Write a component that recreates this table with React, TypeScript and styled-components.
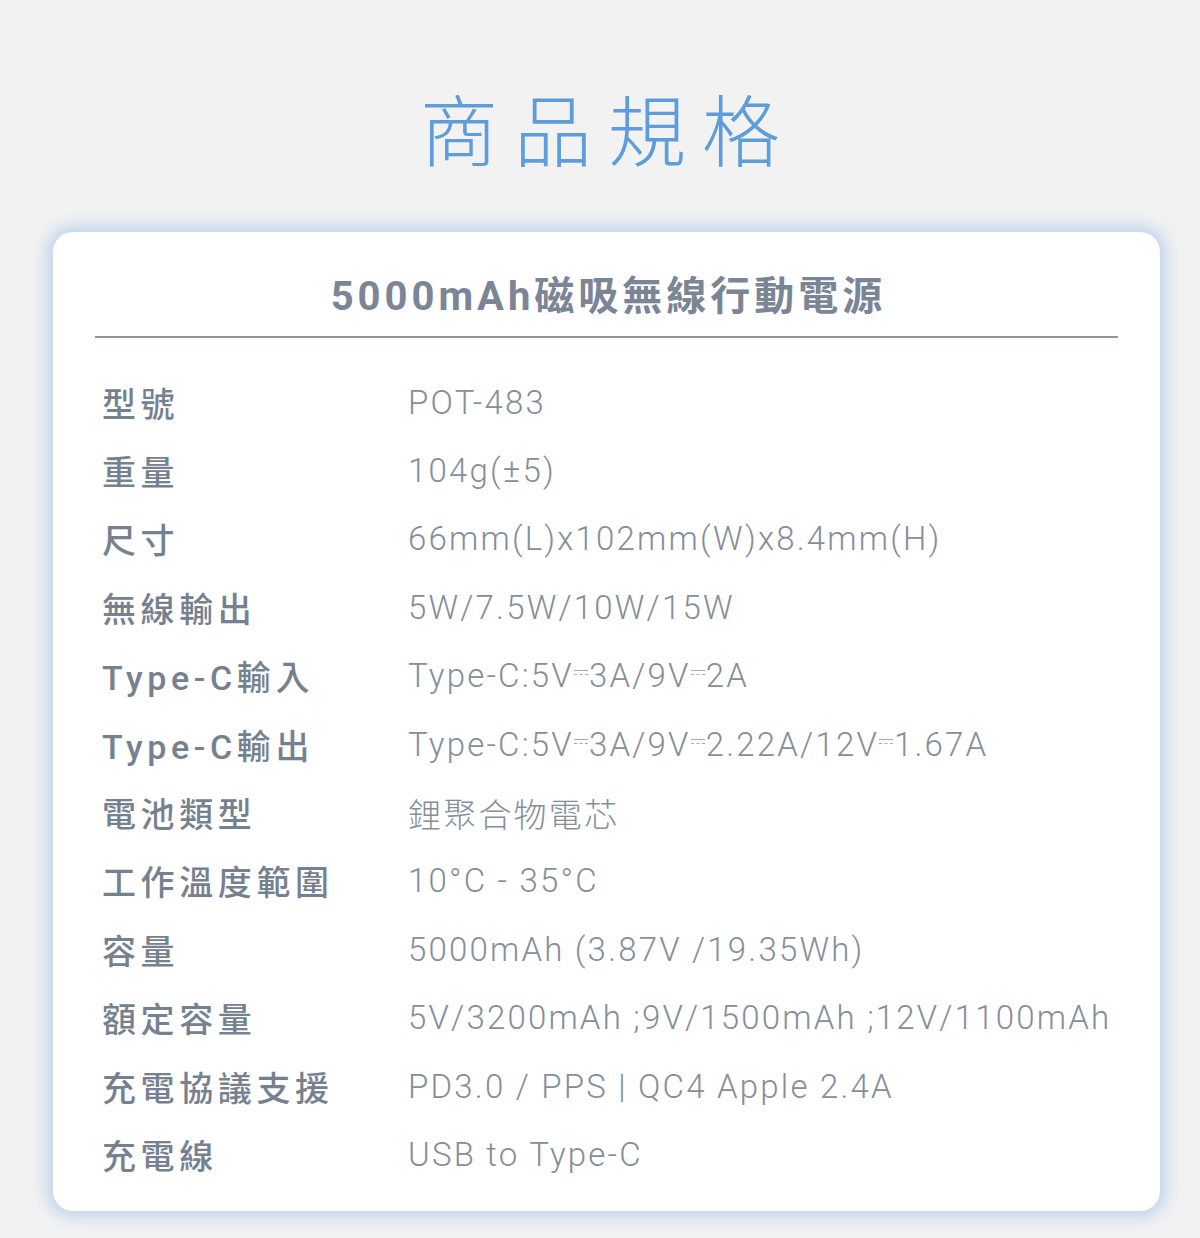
import React from 'react';
import styled, { createGlobalStyle } from 'styled-components';

const GlobalStyle = createGlobalStyle`
  html, body {
    margin: 0;
    padding: 0;
    background: #f2f2f2;
  }
  body {
    font-family: Roboto, "Noto Sans CJK TC", sans-serif;
  }
`;

const Page = styled.div`
  width: 1200px;
  height: 1238px;
  box-sizing: border-box;
  padding-top: 84px;
  background: #f2f2f2;
`;

const Title = styled.h1`
  margin: 0 0 62px 0;
  text-align: center;
  font-family: "Noto Sans CJK TC", sans-serif;
  font-weight: 300;
  font-size: 78px;
  line-height: 86px;
  letter-spacing: 16px;
  padding-left: 16px;
  color: #5d9ddb;
`;

const Card = styled.section`
  margin-left: 53px;
  width: 1107px;
  box-sizing: border-box;
  padding: 40px 42px 22px 42px;
  background: #fff;
  border-radius: 20px;
  box-shadow: 0 0 16px 6px rgba(176, 202, 234, 0.8);
`;

const Subtitle = styled.h2`
  margin: 0;
  padding-bottom: 14px;
  border-bottom: 2px solid #8c95a2;
  text-align: center;
  font-family: Roboto, "Noto Sans CJK TC", sans-serif;
  font-weight: 700;
  font-size: 40px;
  line-height: 50px;
  letter-spacing: 4px;
  padding-left: 4px;
  color: #7b8595;
`;

const SpecList = styled.dl`
  margin: 30px 0 0 0;
  padding-left: 7px;
  display: grid;
  grid-template-columns: 306px 1fr;
  grid-auto-rows: 68.4px;
  align-items: center;
`;

const Label = styled.dt`
  margin: 0;
  font-family: Roboto, "Noto Sans CJK TC", sans-serif;
  font-weight: 500;
  font-size: 34px;
  letter-spacing: 4.6px;
  color: #76818f;
  white-space: nowrap;
`;

const Value = styled.dd`
  margin: 0;
  font-family: Roboto, "Noto Sans CJK TC", sans-serif;
  font-weight: 300;
  font-size: 33px;
  letter-spacing: 2.2px;
  color: #858e9b;
  white-space: nowrap;
`;

const Dc = styled.span`
  display: inline-block;
  position: relative;
  width: 14px;
  height: 5px;
  margin: 0 1px 0 0;
  vertical-align: 0.33em;
  border-top: 1.5px solid #a3aab4;
  &::after {
    content: '';
    position: absolute;
    left: 0;
    right: 0;
    top: 3px;
    border-top: 1.5px dashed #a3aab4;
  }
`;

type Spec = { label: string; value: React.ReactNode };

const specs: Spec[] = [
  { label: '型號', value: 'POT-483' },
  { label: '重量', value: '104g(±5)' },
  { label: '尺寸', value: '66mm(L)x102mm(W)x8.4mm(H)' },
  { label: '無線輸出', value: '5W/7.5W/10W/15W' },
  {
    label: 'Type-C輸入',
    value: (
      <>
        Type-C:5V<Dc />3A/9V<Dc />2A
      </>
    ),
  },
  {
    label: 'Type-C輸出',
    value: (
      <>
        Type-C:5V<Dc />3A/9V<Dc />2.22A/12V<Dc />1.67A
      </>
    ),
  },
  { label: '電池類型', value: '鋰聚合物電芯' },
  { label: '工作溫度範圍', value: '10°C - 35°C' },
  { label: '容量', value: '5000mAh (3.87V /19.35Wh)' },
  { label: '額定容量', value: '5V/3200mAh ;9V/1500mAh ;12V/1100mAh' },
  { label: '充電協議支援', value: 'PD3.0 / PPS | QC4 Apple 2.4A' },
  { label: '充電線', value: 'USB to Type-C' },
];

export default function App() {
  return (
    <Page>
      <GlobalStyle />
      <Title>商品規格</Title>
      <Card>
        <Subtitle>5000mAh磁吸無線行動電源</Subtitle>
        <SpecList>
          {specs.map((s) => (
            <React.Fragment key={s.label}>
              <Label>{s.label}</Label>
              <Value>{s.value}</Value>
            </React.Fragment>
          ))}
        </SpecList>
      </Card>
    </Page>
  );
}
